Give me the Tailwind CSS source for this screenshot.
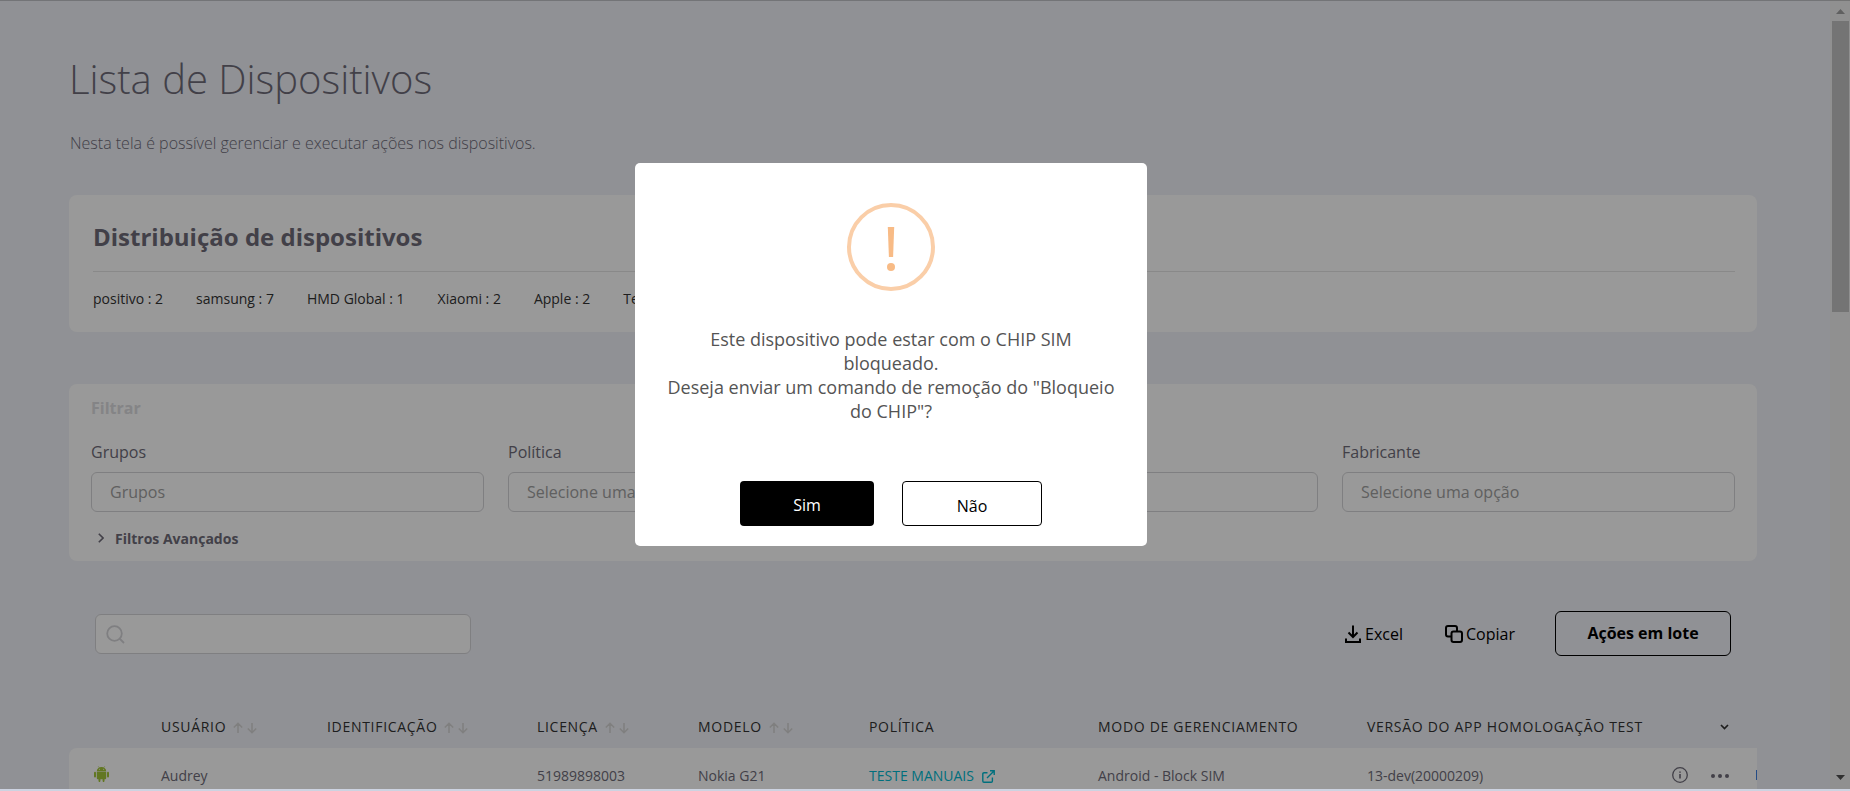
<!DOCTYPE html>
<html lang="pt-BR">
<head>
<meta charset="utf-8">
<title>Lista de Dispositivos</title>
<script src="https://cdn.jsdelivr.net/npm/@tailwindcss/browser@4"></script>
</head>
<body class="relative h-[791px] w-[1850px] overflow-hidden bg-[#f0f2f8] font-['Open_Sans',sans-serif] text-[#6e6b78]">
<svg class="hidden">
  <symbol id="sort" viewBox="0 0 24 12"><path d="M5 11V1.500M.8 5.500L5 1.300l4.200 4.200M19 1v9.500M14.800 6.500L19 10.700l4.200-4.200" fill="none" stroke="#d4d4d4" stroke-width="1.500"/></symbol>
</svg>
<div class="flex h-[791px] overflow-hidden">
  <main class="w-[1830px] shrink-0 pt-[51px] pr-[73px] pl-[69px]">
    <h1 class="h-[56px] text-[40px] leading-[56px] font-light text-[#6e6b78]">Lista de Dispositivos</h1>
    <p class="mt-6 h-6 pl-px text-base leading-6 font-light">Nesta tela é possível gerenciar e executar ações nos dispositivos.</p>
    <section class="mt-10 h-[137px] rounded-lg bg-white pl-6 pr-[22px]">
      <h2 class="h-[77px] border-b border-[#e4e4e4] pt-[24px] text-2xl leading-9 font-bold">Distribuição de dispositivos</h2>
      <div class="flex gap-[33px] pt-[17px] text-sm leading-5 text-[#333]">
        <span>positivo : 2</span><span>samsung : 7</span><span>HMD Global : 1</span><span>Xiaomi : 2</span><span>Apple : 2</span><span>Tectoy : 1</span>
      </div>
    </section>
    <section class="mt-[52px] h-[177px] rounded-lg bg-white pr-[22px] pl-[22px]">
      <h3 class="pt-3 text-base leading-6 font-bold text-[#dcdce0]">Filtrar</h3>
      <div class="mt-5 grid grid-cols-4 gap-6 text-base leading-6">
        <label>Grupos<span class="mt-2 flex h-10 items-center rounded-md border border-[#d4d4d8] pl-[18px] text-[#a0a0a0]">Grupos</span></label>
        <label>Política<span class="mt-2 flex h-10 items-center rounded-md border border-[#d4d4d8] pl-[18px] text-[#a0a0a0]">Selecione uma</span></label>
        <label>Status<span class="mt-2 flex h-10 items-center rounded-md border border-[#d4d4d8] pl-[18px]"></span></label>
        <label>Fabricante<span class="mt-2 flex h-10 items-center rounded-md border border-[#d4d4d8] pl-[18px] text-[#a0a0a0]">Selecione uma opção</span></label>
      </div>
      <div class="mt-[17px] flex items-center pl-[7px] text-sm leading-5 font-bold">
        <svg class="mr-[11px] mb-[2px] h-[10px] w-[6px]" viewBox="0 0 6 10"><path d="M.8.8L5 5 .8 9.200" fill="none" stroke="#6e6b78" stroke-width="1.600"/></svg>Filtros Avançados
      </div>
    </section>
    <div class="mt-[50px] flex h-[45px] items-center px-[26px] text-base text-black">
      <div class="mt-px flex h-10 w-[376px] items-center rounded-md border border-[#d4d4d8] bg-white pl-[10px]">
        <svg class="size-[19px]" viewBox="0 0 19 19" fill="none" stroke="#d4d4d8" stroke-width="1.800"><circle cx="8.500" cy="8.500" r="7.300"/><path d="M13.500 13.500l4.500 4.500"/></svg>
      </div>
      <div class="ml-auto flex items-center">
        <svg class="mr-1 h-[18px] w-[16px]" viewBox="0 0 16 18" fill="none" stroke="#000" stroke-width="2"><path d="M8 .5v11M3.500 7.500L8 12l4.500-4.500M1 13.500V17h14v-3.500"/></svg>
        <span class="mr-[42px]">Excel</span>
        <svg class="mr-[3px] h-[18px] w-[18px]" viewBox="0 0 18 18" fill="none" stroke="#000" stroke-width="2"><path d="M6.500 11.500H3a2 2 0 0 1-2-2V3a2 2 0 0 1 2-2h7a2 2 0 0 1 2 2v3"/><rect x="6.500" y="6.500" width="10.500" height="10.500" rx="2"/></svg>
        <span class="mr-[40px]">Copiar</span>
        <button class="h-[45px] w-[176px] rounded-md border border-black pb-[2px] font-bold">Ações em lote</button>
      </div>
    </div>
    <div class="mt-[61px] grid h-[31px] w-[1688px] grid-cols-[92px_166px_210px_161px_171px_229px_269px_353px_1fr] text-sm leading-5 tracking-[0.7px] whitespace-nowrap text-[#333]">
      <span></span>
      <span class="flex items-start">USUÁRIO<svg class="mt-[5px] ml-[7px] h-3 w-6"><use href="#sort"/></svg></span>
      <span class="flex items-start">IDENTIFICAÇÃO<svg class="mt-[5px] ml-[7px] h-3 w-6"><use href="#sort"/></svg></span>
      <span class="flex items-start">LICENÇA<svg class="mt-[5px] ml-[7px] h-3 w-6"><use href="#sort"/></svg></span>
      <span class="flex items-start">MODELO<svg class="mt-[5px] ml-[7px] h-3 w-6"><use href="#sort"/></svg></span>
      <span>POLÍTICA</span>
      <span>MODO DE GERENCIAMENTO</span>
      <span>VERSÃO DO APP HOMOLOGAÇÃO TEST</span>
      <svg class="mt-[7px] h-[6px] w-[9px]" viewBox="0 0 9 6"><path d="M1 1l3.500 3.500L8 1" fill="none" stroke="#333" stroke-width="1.700"/></svg>
    </div>
    <div class="grid h-[60px] w-[1688px] grid-cols-[92px_376px_161px_171px_229px_269px_1fr] overflow-hidden rounded-tl-lg bg-white pt-[18px] text-sm leading-5 whitespace-nowrap">
      <svg class="ml-[25px] h-4 w-[15px]" viewBox="0 0 15 16" fill="#a4c639"><path d="M2.800 5.200a4.700 4.200 0 0 1 9.400 0zM2.800 5.800h9.400v6.400a1 1 0 0 1-1 1h-.7v1.900a.95.95 0 0 1-1.900 0v-1.900H6.400v1.900a.95.95 0 0 1-1.900 0v-1.900h-.7a1 1 0 0 1-1-1z"/><rect y="5.800" width="2" height="5.600" rx="1"/><rect x="13" y="5.800" width="2" height="5.600" rx="1"/><path d="M4.200.2l1 1.600M10.800.2l-1 1.600" stroke="#a4c639" stroke-width=".5"/><g fill="#fff"><circle cx="5.400" cy="3.300" r=".5"/><circle cx="9.600" cy="3.300" r=".5"/></g></svg>
      <span>Audrey</span>
      <span>51989898003</span>
      <span>Nokia G21</span>
      <span class="flex text-[#00bad1]">TESTE MANUAIS<svg class="mt-1 ml-2 h-[13px] w-[13px]" viewBox="0 0 13 13" fill="none" stroke="#00bad1" stroke-width="1.400"><path d="M5.500 2.700H2a1.200 1.200 0 0 0-1.200 1.200V11A1.200 1.200 0 0 0 2 12.200h7.200a1.200 1.200 0 0 0 1.200-1.200V7.500M8 .8h4.200V5M12 1L5 8"/></svg></span>
      <span>Android - Block SIM</span>
      <span class="flex">13-dev(20000209)
        <svg class="mt-px ml-auto size-4" viewBox="0 0 16 16" fill="none" stroke="#6e6b78" stroke-width="1.300"><circle cx="8" cy="8" r="7.300"/><path d="M8 7v4.500M8 4.500v1.300" stroke-width="1.600"/></svg>
        <svg class="mt-[8px] ml-[23px] h-[4px] w-[18px]" viewBox="0 0 18 4" fill="#6e6b78"><circle cx="2" cy="2" r="2"/><circle cx="9" cy="2" r="2"/><circle cx="16" cy="2" r="2"/></svg>
        <i class="mt-[4px] ml-[27px] h-[10px] w-px bg-[#3d7fe0]"></i>
      </span>
    </div>
  </main>
  <aside class="flex w-[20px] shrink-0 flex-col items-center bg-[#f1f1f1] pr-px pl-[2px]">
    <svg class="mt-[9px] h-[5px] w-[9px]" viewBox="0 0 9 5"><path d="M0 5L4.500 0 9 5z" fill="#a0a0a0"/></svg>
    <div class="mt-[7px] h-[291px] w-[17px] bg-[#c1c1c1]"></div>
    <svg class="mt-auto mb-[11px] h-[5px] w-[9px]" viewBox="0 0 9 5"><path d="M0 0h9L4.500 5z" fill="#505050"/></svg>
  </aside>
</div>
<div class="absolute inset-0 border-t border-black/20 bg-black/40"></div>
<div class="absolute inset-x-0 bottom-0 h-[2px] bg-[#cdd3e1]"></div>
<div role="dialog" class="absolute top-[163px] left-[635px] flex h-[383px] w-[512px] flex-col items-center rounded-[5px] bg-white pt-10 text-[#545454]">
  <div class="flex size-[88px] items-center justify-center rounded-full border-4 border-[#facea8] pt-[3px]">
    <svg class="h-[44px] w-[8px]" viewBox="0 0 8 44" fill="#f8bb86"><path d="M.8 0h6.400L6.100 30H1.900z"/><circle cx="4" cy="39.900" r="4"/></svg>
  </div>
  <p class="mt-[36px] text-center text-lg leading-6">Este dispositivo pode estar com o CHIP SIM<br>bloqueado.<br>Deseja enviar um comando de remoção do "Bloqueio<br>do CHIP"?</p>
  <div class="mt-[58px] flex gap-7 text-base">
    <button class="h-[45px] w-[134px] rounded bg-black pt-[3px] text-white">Sim</button>
    <button class="h-[45px] w-[140px] rounded border border-black pt-[5px] text-black">Não</button>
  </div>
</div>
</body>
</html>
